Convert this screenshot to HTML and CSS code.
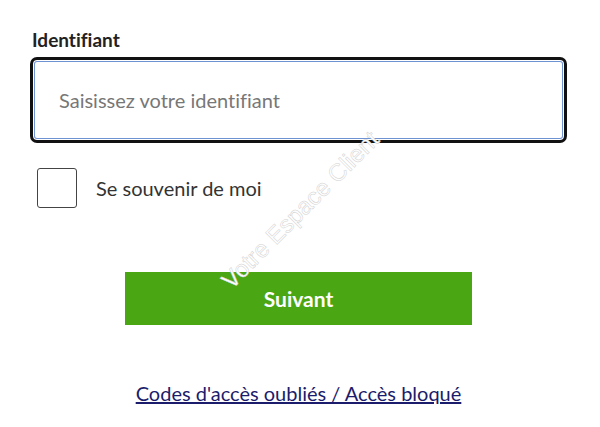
FILE: index.html
```html
<!DOCTYPE html>
<html lang="fr">
<head>
    <meta charset="UTF-8">
    <meta name="viewport" content="width=device-width, initial-scale=1.0">
    <title>Identification</title>
    <link rel="stylesheet" href="styles.css">
</head>
<body>
    <form class="login-form">
        <label class="field-label" for="identifiant">Identifiant</label>
        <input class="field-input" id="identifiant" type="text" placeholder="Saisissez votre identifiant">

        <div class="remember-row">
            <input class="remember-box" id="remember" type="checkbox">
            <label class="remember-label" for="remember">Se souvenir de moi</label>
        </div>

        <div class="actions">
            <button class="submit-btn" type="button">Suivant</button>
            <a class="help-link" href="#">Codes d'accès oubliés / Accès bloqué</a>
        </div>

        <span class="watermark">Votre Espace Client</span>
    </form>
</body>
</html>
```

FILE: styles.css
```css
body {
    margin: 0;
    background: #fff;
    font-family: Lato, "Open Sans", sans-serif;
    font-variant-ligatures: none;
    color: #333;
}
.login-form {
    position: relative;
    padding: 28px 33px 0 30px;
}
.field-label {
    display: block;
    padding-left: 2px;
    font-size: 19px;
    font-weight: 700;
    line-height: 24px;
    color: #222;
}
.field-input {
    display: block;
    box-sizing: border-box;
    width: 100%;
    height: 86px;
    margin-top: 5px;
    padding: 0 26px;
    border: 3px solid #111;
    border-radius: 7px;
    box-shadow: inset 0 0 0 1px #fff, inset 0 0 0 2px #6f92d2;
    font-family: inherit;
    font-variant-ligatures: none;
    font-size: 20px;
    color: #333;
    outline: none;
}
.field-input::placeholder {
    color: #777;
}
.remember-row {
    display: flex;
    align-items: center;
    gap: 19px;
    margin-top: 25px;
    padding-left: 7px;
}
.remember-box {
    appearance: none;
    width: 40px;
    height: 40px;
    margin: 0;
    border: 1px solid #444;
    border-radius: 3px;
    background: #fff;
}
.remember-label {
    font-size: 20px;
    color: #333;
}
.actions {
    display: flex;
    flex-direction: column;
    align-items: center;
    margin-top: 64px;
}
.submit-btn {
    width: 347px;
    height: 53px;
    border: none;
    background: #4aa612;
    color: #fff;
    font-family: inherit;
    font-size: 21px;
    font-weight: 700;
}
.help-link {
    margin-top: 56px;
    font-size: 20px;
    line-height: 24px;
    color: #1c1c6c;
    text-decoration: underline;
}
.watermark {
    position: absolute;
    left: 195px;
    top: 196px;
    font-family: "Liberation Sans", Arial, sans-serif;
    font-size: 24px;
    color: #fff;
    -webkit-text-stroke: 0.5px #d0d0d0;
    transform: rotate(-45deg);
    pointer-events: none;
}
```
